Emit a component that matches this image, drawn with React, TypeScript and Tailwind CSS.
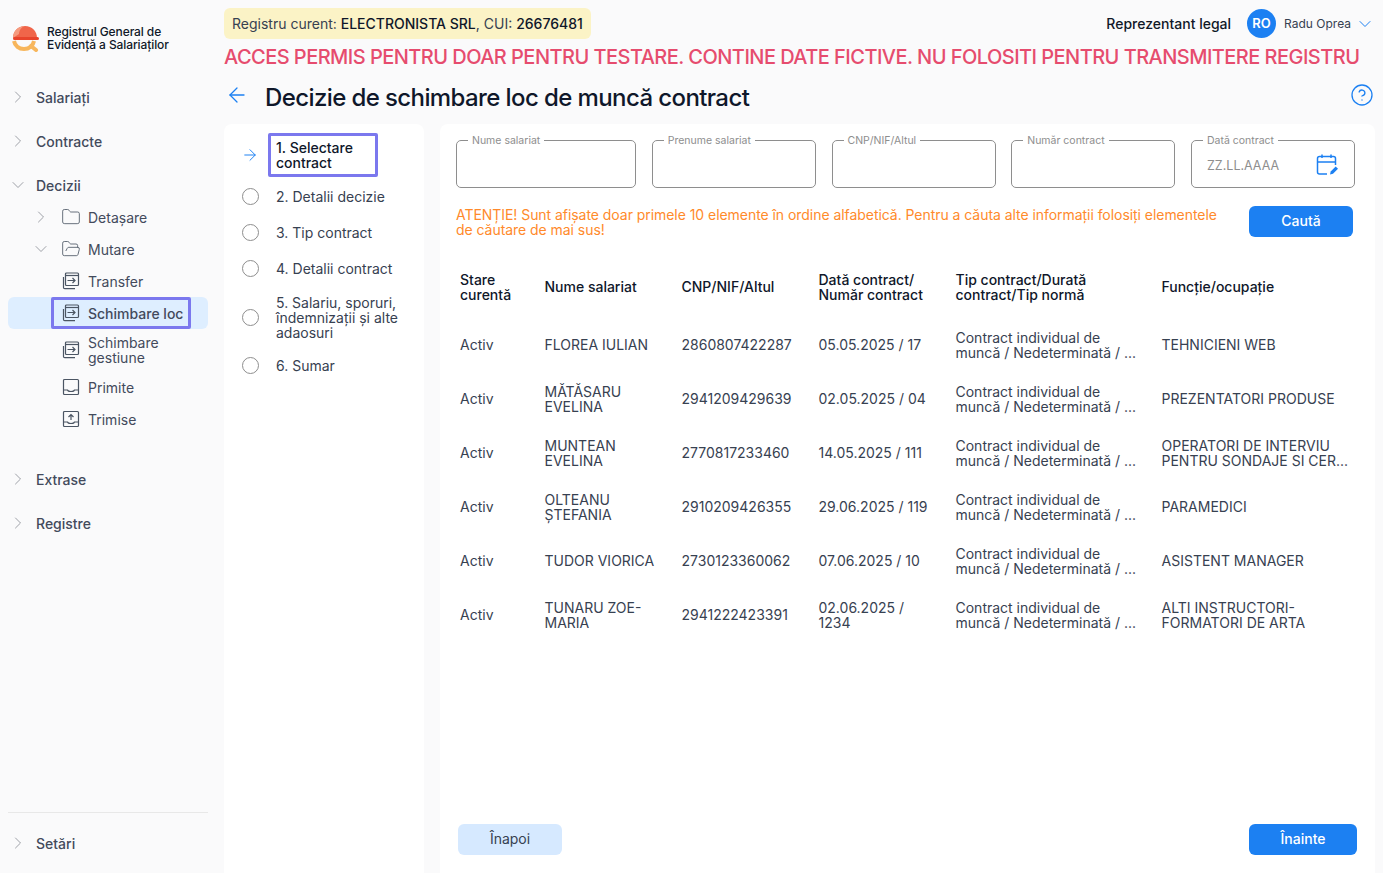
import { ChevronRight, ChevronDown, Folder, FolderOpen, ArrowLeft, ArrowRight, CircleHelp } from 'lucide-react';
import type { ReactNode } from 'react';

const rows = [
  { name: 'FLOREA IULIAN', cnp: '2860807422287', date: '05.05.2025 / 17', job: 'TEHNICIENI WEB' },
  { name: 'MĂTĂSARU EVELINA', cnp: '2941209429639', date: '02.05.2025 / 04', job: 'PREZENTATORI PRODUSE' },
  { name: 'MUNTEAN EVELINA', cnp: '2770817233460', date: '14.05.2025 / 111', job: 'OPERATORI DE INTERVIU PENTRU SONDAJE SI CER...' },
  { name: 'OLTEANU ȘTEFANIA', cnp: '2910209426355', date: '29.06.2025 / 119', job: 'PARAMEDICI' },
  { name: 'TUDOR VIORICA', cnp: '2730123360062', date: '07.06.2025 / 10', job: 'ASISTENT MANAGER' },
  { name: 'TUNARU ZOE-MARIA', cnp: '2941222423391', date: '02.06.2025 / 1234', job: 'ALTI INSTRUCTORI-FORMATORI DE ARTA' },
];

const steps = ['2. Detalii decizie', '3. Tip contract', '4. Detalii contract', '5. Salariu, sporuri, îndemnizații și alte adaosuri', '6. Sumar'];

function Logo() {
  return (
    <svg width="28" height="28" viewBox="0 0 28 28" fill="none">
      <path d="M1 14C1 7 6 2 13 2C20 2 25 7 25 14Z" fill="#f0654a" />
      <path d="M13 2C9 3 7 7 7 10L1 14C1 7 6 2 13 2Z" fill="#f59a7e" />
      <rect x="1" y="13" width="26" height="3" rx="1.5" fill="#e8442c" />
      <path d="M2 17C3 22 7 25 12 25C17 25 21 22 22 17" stroke="#f7b65c" strokeWidth="4" fill="none" />
      <path d="M19 22L24 26" stroke="#f7b65c" strokeWidth="4" strokeLinecap="round" />
    </svg>
  );
}

function MoveIcon() {
  return (
    <svg width="18" height="18" viewBox="0 0 18 18" fill="none" stroke="#4b5563" strokeWidth="1.2">
      <rect x="3.5" y="1" width="13" height="12.5" rx="1" />
      <path d="M3.5 3.5H16.5" />
      <path d="M1.5 5V15.5C1.5 16.2 2 16.7 2.7 16.7H13" />
      <path d="M5.5 8.5H13M10.5 6L13 8.5L10.5 11" />
    </svg>
  );
}

function InboxIcon({ up }: { up?: boolean }) {
  return (
    <svg width="18" height="18" viewBox="0 0 18 18" fill="none" stroke="#4b5563" strokeWidth="1.2">
      <rect x="1.5" y="1.5" width="15" height="15" rx="1" />
      <path d="M1.5 12H5.5C6 14 12 14 12.5 12H16.5" />
      {up && <path d="M9 10V4.5M6.5 7L9 4.5L11.5 7" />}
    </svg>
  );
}

function CalendarIcon() {
  return (
    <svg width="24" height="24" viewBox="0 0 24 24" fill="none" stroke="#1c80f2" strokeWidth="1.5">
      <path d="M12 21H4.5C3.5 21 2.5 20 2.5 19V5.5C2.5 4.5 3.5 3.5 4.5 3.5H18.5C19.5 3.5 20.5 4.5 20.5 5.5V12" />
      <path d="M2.5 9H20.5M7 1.5V5M16 1.5V5" />
      <path d="M15 21.5L15.7 18.5L20.7 13.5L23 15.8L18 20.8Z" fill="#1c80f2" stroke="none" />
    </svg>
  );
}

function NavItem({ icon, label, open, active, caret, tall }: { icon: ReactNode; label: string; open?: boolean; active?: boolean; caret?: boolean; tall?: boolean }) {
  return (
    <div className={`flex items-center rounded-md ${tall ? 'h-[42px]' : 'h-[32px]'} ${active ? 'bg-[#deeeff]' : ''}`}>
      <div className="w-[44px] flex justify-end pr-[1px] shrink-0">
        {caret && (open ? <ChevronDown size={20} strokeWidth={1} color="#8b8f96" /> : <ChevronRight size={20} strokeWidth={1} color="#8b8f96" />)}
      </div>
      {active ? (
        <div className="flex items-center gap-[8px] -ml-[1px] pl-[8px] pr-[5px] h-[32px] border-[3px] border-[#7b78ee] rounded-[2px] font-medium">
          <span className="w-[18px] flex justify-center shrink-0">{icon}</span>
          <span className="text-[14px] leading-[15px] text-[#434a5c] whitespace-nowrap">{label}</span>
        </div>
      ) : (
        <div className="flex items-center gap-[8px] pl-[10px] pr-[6px]">
          <span className="w-[18px] flex justify-center shrink-0">{icon}</span>
          <span className="text-[14px] leading-[15px] text-[#434a5c] w-[90px]">{label}</span>
        </div>
      )}
    </div>
  );
}

function TopNav({ label, open }: { label: string; open?: boolean }) {
  return (
    <div className="flex items-center h-[44px] gap-[8px]">
      {open ? <ChevronDown size={20} strokeWidth={1} color="#8b8f96" /> : <ChevronRight size={20} strokeWidth={1} color="#8b8f96" />}
      <span className="text-[14px] font-medium text-[#434a5c]">{label}</span>
    </div>
  );
}

function Field({ label, width, placeholder, icon }: { label: string; width: string; placeholder?: string; icon?: boolean }) {
  return (
    <fieldset className={`${width} h-[54px] -mt-[6px] border border-[#8e8e8e] rounded-[5px] px-[11px] flex items-center justify-between`}>
      <legend className="px-[4px] text-[10.5px] leading-[12px] text-[#8e8e8e] translate-y-[1px]">{label}</legend>
      {placeholder && <span className="pl-[4px] text-[12.5px] text-[#8e8e8e] -mt-[1px]">{placeholder}</span>}
      {icon && <span className="-mt-[4px] mr-[4px]"><CalendarIcon /></span>}
    </fieldset>
  );
}

export default function App() {
  return (
    <div className="flex h-[873px] overflow-hidden bg-[#fafafb] text-[#0f172a] font-['Inter',sans-serif]">
      <aside className="w-[224px] shrink-0 flex flex-col pl-[8px] pr-[16px]">
        <div className="flex items-center gap-[7px] h-[75px] pl-[4px] pt-[1px]">
          <Logo />
          <div className="text-[12px] leading-[13px] font-medium text-[#101828] tracking-[-0.1px]">Registrul General de<br />Evidență a Salariaților</div>
        </div>
        <div>
          <TopNav label="Salariați" />
          <TopNav label="Contracte" />
          <TopNav label="Decizii" open />
          <div className="-mt-[6px]">
            <NavItem caret icon={<Folder size={20} strokeWidth={1} color="#4b5563" className="shrink-0" />} label="Detașare" />
            <NavItem caret open icon={<FolderOpen size={20} strokeWidth={1} color="#4b5563" className="shrink-0" />} label="Mutare" />
            <NavItem icon={<MoveIcon />} label="Transfer" />
            <NavItem active icon={<MoveIcon />} label="Schimbare loc" />
            <NavItem tall icon={<MoveIcon />} label="Schimbare gestiune" />
            <NavItem icon={<InboxIcon />} label="Primite" />
            <NavItem icon={<InboxIcon up />} label="Trimise" />
          </div>
          <div className="mt-[22px]">
            <TopNav label="Extrase" />
            <TopNav label="Registre" />
          </div>
        </div>
        <div className="mt-auto border-t border-[#e8e8e8] h-[61px] flex items-center">
          <div className="w-full"><TopNav label="Setări" /></div>
        </div>
      </aside>

      <main className="flex-1 min-w-0 flex flex-col">
        <div className="flex items-center justify-between h-[47px] pr-[8px]">
          <div className="h-[31px] rounded-md bg-[#fbf3c6] px-[8px] flex items-center text-[14px] text-[#374151]">
            Registru curent:&nbsp;<span className="font-medium text-[#0f172a]">ELECTRONISTA SRL</span>, CUI:&nbsp;<span className="font-medium text-[#0f172a]">26676481</span>
          </div>
          <div className="flex items-center">
            <span className="text-[14px] font-medium text-[#101828]">Reprezentant legal</span>
            <span className="ml-[16px] w-[29px] h-[29px] rounded-full bg-[#1c80f2] text-white text-[13px] font-semibold flex items-center justify-center">RO</span>
            <span className="ml-[8px] text-[12px] text-[#374151]">Radu Oprea</span>
            <ChevronDown className="ml-[4px]" size={20} color="#1c80f2" strokeWidth={1.2} />
          </div>
        </div>
        <div className="mt-[1px] text-[20px] leading-[18px] tracking-[-0.54px] font-medium text-[#e64c6e] whitespace-nowrap">ACCES PERMIS PENTRU DOAR PENTRU TESTARE. CONTINE DATE FICTIVE. NU FOLOSITI PENTRU TRANSMITERE REGISTRU</div>
        <div className="flex items-center h-[58px] pt-[5px] pr-[9px]">
          <ArrowLeft size={24} strokeWidth={1.3} color="#1c80f2" className="ml-[1px] -mt-[5px]" />
          <h1 className="ml-[16px] text-[24px] tracking-tight font-medium text-[#0f172a] leading-none">Decizie de schimbare loc de muncă contract</h1>
          <CircleHelp size={24} strokeWidth={1.3} color="#1c80f2" className="ml-auto -mt-[5px]" />
        </div>

        <div className="flex-1 min-h-0 flex gap-[16px] pr-[8px]">
          <section className="w-[200px] bg-white rounded-t-lg pt-[9px] shrink-0">
            <div className="flex items-center h-[44px]">
              <span className="w-[44px] flex justify-center shrink-0 pl-[7px]"><ArrowRight size={18} strokeWidth={1.3} color="#1c80f2" /></span>
              <div className="w-[110px] h-[44px] border-[3px] border-[#7b78ee] pl-[5px] flex items-center rounded-[2px] text-[14px] leading-[15px] font-medium text-[#0f172a]">1. Selectare contract</div>
            </div>
            <div className="pt-[1px]">
              {steps.map((s) => (
                <div key={s} className={`flex items-center ${s.startsWith('5') ? 'h-[62px]' : s.startsWith('6') ? 'h-[34px]' : 'h-[36px]'}`}>
                  <span className="w-[52px] shrink-0 flex justify-center"><span className="w-[17px] h-[17px] rounded-full border-[1.5px] border-[#8e8e8e]" /></span>
                  <span className="w-[130px] text-[14px] leading-[15px] text-[#374151]">{s}</span>
                </div>
              ))}
            </div>
          </section>

          <section className="flex-1 min-w-0 bg-white rounded-t-lg px-[16px] pt-[16px] flex flex-col">
            <div className="flex justify-between pr-[4px] h-[48px]">
              <Field label="Nume salariat" width="w-[180px]" />
              <Field label="Prenume salariat" width="w-[164px]" />
              <Field label="CNP/NIF/Altul" width="w-[164px]" />
              <Field label="Număr contract" width="w-[164px]" />
              <Field label="Dată contract" width="w-[164px]" placeholder="ZZ.LL.AAAA" icon />
            </div>
            <div className="flex items-center justify-between mt-[18px] pr-[6px]">
              <p className="w-[775px] text-[14px] leading-[15px] tracking-[-0.05px] text-[#ff8a2b]">ATENȚIE! Sunt afișate doar primele 10 elemente în ordine alfabetică. Pentru a căuta alte informații folosiți elementele de căutare de mai sus!</p>
              <button className="w-[104px] h-[31px] pb-[2px] rounded-md bg-[#1c80f2] text-white text-[14px] font-medium">Caută</button>
            </div>

            <div className="mt-[27px] pl-[4px] pr-[4px]">
              <div className="grid grid-cols-[84.5px_137px_137px_137px_206px_1fr] items-center h-[44px] text-[14px] leading-[15px] font-medium text-[#0f172a]">
                <span className="pt-[2px]">Stare<br />curentă</span>
                <span>Nume salariat</span>
                <span>CNP/NIF/Altul</span>
                <span className="pt-[2px]">Dată contract/<br />Număr contract</span>
                <span className="pt-[2px]">Tip contract/Durată<br />contract/Tip normă</span>
                <span>Funcție/ocupație</span>
              </div>
              <div className="mt-[9px]">
                {rows.map((r) => (
                  <div key={r.cnp} className="grid grid-cols-[84.5px_137px_137px_137px_206px_1fr] items-center h-[54px] text-[14px] leading-[15px] text-[#374151]">
                    <span>Activ</span>
                    <span className={r.name.length > 13 ? 'pr-[24px] pt-[2px]' : 'pr-[24px]'}>{r.name}</span>
                    <span>{r.cnp}</span>
                    <span className={r.date.length > 16 ? 'pr-[16px] pt-[2px]' : 'pr-[16px]'}>{r.date}</span>
                    <span className="pr-[16px] pt-[2px]">Contract individual de<br />muncă / Nedeterminată / ...</span>
                    <span className={r.job.length > 30 ? 'pt-[2px]' : ''}>{r.job}</span>
                  </div>
                ))}
              </div>
            </div>

            <div className="mt-auto flex justify-between pb-[18px] pl-[2px]">
              <button className="w-[104px] h-[31px] pb-[2px] rounded-md bg-[#d6e9ff] text-[14px] text-[#374151]">Înapoi</button>
              <button className="w-[108px] h-[31px] pb-[2px] -mr-[-2px] rounded-md bg-[#1c80f2] text-white text-[14px] font-medium">Înainte</button>
            </div>
          </section>
        </div>
      </main>
    </div>
  );
}
